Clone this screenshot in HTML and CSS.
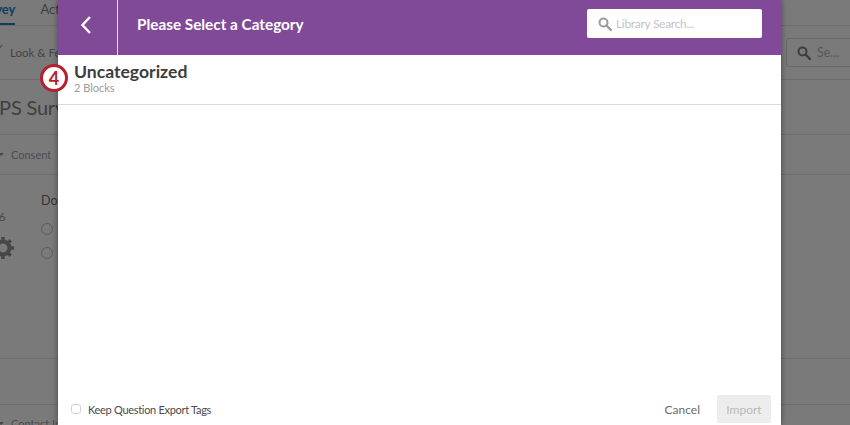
FILE: index.html
```html
<!DOCTYPE html>
<html lang="en">
<head>
<meta charset="utf-8">
<title>Please Select a Category</title>
<link rel="stylesheet" href="styles.css">
</head>
<body>
<div class="page">
  <div class="tabs">
    <span class="tab tab-active">Survey</span>
    <span class="tab">Actions</span>
  </div>
  <div class="toolbar">
    <span class="tool"><svg class="tool-check" viewBox="0 0 8 8"><path d="M1 4l1 1 3-4" fill="none" stroke="#4a4a4a" stroke-width="1.2"/></svg>Look &amp; Feel</span>
    <span class="bg-search">
      <svg class="bg-search-icon" viewBox="0 0 14 14"><circle cx="5.5" cy="5.5" r="4" fill="none" stroke="#3d3d3d" stroke-width="2"/><path d="M8.5 8.5l4.3 4.3" stroke="#3d3d3d" stroke-width="2.4" stroke-linecap="round"/></svg>Se...
    </span>
  </div>
  <div class="survey-title">NPS Survey</div>
  <div class="block-head"><span class="caret"></span>Consent</div>
  <div class="question">
    <div class="q-side">
      <span class="q-num">Q6</span>
      <svg class="gear" viewBox="0 0 24 24"><circle cx="12" cy="12" r="6.5" fill="none" stroke="#474747" stroke-width="4"/><path d="M12 1v22M1 12h22M4.2 4.2l15.6 15.6M19.8 4.2L4.2 19.8" stroke="#474747" stroke-width="3.4" stroke-dasharray="4 14"/></svg>
    </div>
    <div class="q-body">
      <div class="q-text">Do you consent?</div>
      <div class="q-option"><span class="radio"></span></div>
      <div class="q-option"><span class="radio"></span></div>
    </div>
  </div>
  <div class="bottom-gap"></div>
  <div class="block-foot"><span class="caret"></span>Contact Info</div>
</div>

<div class="modal">
  <header class="modal-head">
    <button class="back" type="button" aria-label="Back">
      <svg class="back-icon" viewBox="0 0 12 20"><path d="M10 2L2.5 10l7.5 8" fill="none" stroke="#fff" stroke-width="2.4"/></svg>
    </button>
    <h1 class="modal-title">Please Select a Category</h1>
    <div class="lib-search">
      <svg class="lib-search-icon" viewBox="0 0 14 14"><circle cx="5.5" cy="5.5" r="4" fill="none" stroke="#9b9b9b" stroke-width="2"/><path d="M8.5 8.5l4.3 4.3" stroke="#9b9b9b" stroke-width="2.4" stroke-linecap="round"/></svg>
      <span>Library Search...</span>
    </div>
  </header>
  <div class="cat-head">
    <h2 class="cat-title">Uncategorized</h2>
    <div class="cat-sub">2 Blocks</div>
  </div>
  <div class="modal-body"></div>
  <footer class="modal-foot">
    <label class="keep"><span class="checkbox"></span>Keep Question Export Tags</label>
    <div class="actions">
      <span class="cancel">Cancel</span>
      <span class="import">Import</span>
    </div>
  </footer>
</div>

<div class="badge">4</div>
</body>
</html>
```
FILE: styles.css
```css
* { box-sizing: border-box; }
html, body { margin: 0; height: 100%; }
body {
  width: 850px;
  height: 425px;
  overflow: hidden;
  position: relative;
  background: #7a7a7a;
  font-family: Lato, "Noto Sans", sans-serif;
}
.page { height: 425px; overflow: hidden; color: #474747; }
.tabs {
  height: 26px;
  display: flex;
  gap: 25px;
  margin-left: -24px;
  border-bottom: 1px solid #6d6d6d;
  font-size: 13px;
  line-height: 19px;
}
.tab { height: 25px; color: #3f3f3f; }
.tab-active { color: #103c5e; font-weight: 700; border-bottom: 2px solid #103c5e; }
.toolbar {
  height: 54px;
  display: flex;
  align-items: center;
  justify-content: space-between;
  border-bottom: 1px solid #6d6d6d;
  font-size: 11.5px;
}
.tool { display: flex; align-items: center; margin-left: -3px; position: relative; padding-left: 13px; color: #434343; }
.tool-check { width: 8px; height: 8px; position: absolute; left: 0; top: -2px; }
.bg-search {
  width: 80px;
  height: 29px;
  margin-left: auto;
  margin-right: -16px;
  border: 1px solid #696969;
  border-radius: 3px;
  display: flex;
  align-items: center;
  padding-left: 10px;
  gap: 6px;
  font-size: 12.5px;
  color: #575757;
}
.bg-search-icon { width: 14px; height: 14px; }
.survey-title {
  height: 55px;
  padding-top: 14px;
  margin-left: -16px;
  border-bottom: 1px solid #6d6d6d;
  font-size: 20px;
  letter-spacing: -0.2px;
  line-height: 26px;
  white-space: nowrap;
  color: #3f3f3f;
}
.block-head, .block-foot {
  display: flex;
  align-items: center;
  gap: 7px;
  font-size: 11px;
  color: #4d4d4d;
}
.block-head { height: 40px; border-bottom: 1px solid #6d6d6d; }
.caret {
  width: 0;
  height: 0;
  margin-left: -2px;
  border-left: 3px solid transparent;
  border-right: 3px solid transparent;
  border-top: 3px solid #474747;
}
.question { height: 184px; display: flex; border-bottom: 1px solid #6d6d6d; }
.q-side { width: 44px; margin-left: -11px; padding-top: 34px; flex: none; display: flex; flex-direction: column; }
.q-num { font-size: 12px; line-height: 16px; color: #474747; align-self: flex-start; }
.gear { width: 24px; height: 24px; margin-top: 11px; margin-left: 2px; }
.q-body { padding-top: 17px; padding-left: 8px; white-space: nowrap; }
.q-text { font-size: 12.5px; line-height: 18px; color: #333; margin-bottom: 13px; }
.q-option { height: 24px; }
.radio { display: block; width: 12px; height: 12px; border: 1px solid #5e5e5e; border-radius: 50%; }
.bottom-gap { height: 46px; border-bottom: 1px solid #6d6d6d; }
.block-foot { height: 30px; padding-top: 6px; }

.modal {
  position: absolute;
  left: 58px;
  top: 0;
  width: 723px;
  height: 425px;
  background: #fff;
  display: flex;
  flex-direction: column;
  box-shadow: 0 0 6px rgba(0, 0, 0, 0.45);
}
.modal-head {
  height: 55px;
  flex: none;
  display: flex;
  align-items: flex-start;
  background: #804a99;
  color: #fff;
}
.back {
  width: 60px;
  height: 55px;
  padding: 0 0 5px;
  background: none;
  border: 0;
  border-right: 1px solid #e3d7e8;
  display: flex;
  align-items: center;
  justify-content: center;
  flex: none;
}
.back-icon { width: 12px; height: 20px; margin-left: -4px; }
.modal-title {
  margin: 14px 0 0 19px;
  font-size: 15.3px;
  font-weight: 700;
  line-height: 21px;
  flex: 1;
}
.lib-search {
  width: 175px;
  height: 29px;
  margin: 9px 19px 0 0;
  background: #fff;
  border-radius: 2px;
  display: flex;
  align-items: center;
  gap: 4px;
  padding-left: 11px;
  font-size: 12px;
  letter-spacing: -0.3px;
  color: #c4c4c4;
}
.lib-search-icon { width: 14px; height: 14px; }
.cat-head {
  height: 50px;
  flex: none;
  padding: 7px 16px 0;
  border-bottom: 1px solid #d9d9d9;
}
.cat-title { margin: 0; font-size: 17.6px; font-weight: 700; line-height: 20px; color: #3d3d3d; }
.cat-sub { font-size: 11px; line-height: 12px; color: #9a9a9a; }
.modal-body { flex: 1; }
.modal-foot {
  height: 46px;
  flex: none;
  display: flex;
  align-items: flex-start;
  justify-content: space-between;
  padding: 20px 10px 0 13px;
  font-size: 11px;
}
.keep { display: flex; align-items: center; gap: 7px; height: 20px; color: #4a4a4a; letter-spacing: -0.3px; }
.checkbox { width: 10px; height: 10px; border: 1px solid #d2d2d2; border-radius: 3px; }
.actions { display: flex; align-items: center; gap: 17px; margin-top: -4px; }
.cancel { font-size: 12px; color: #6b6b6b; }
.import {
  width: 54px;
  height: 28px;
  border-radius: 2px;
  background: #ededed;
  color: #b9b9b9;
  font-size: 12px;
  display: flex;
  align-items: center;
  justify-content: center;
}
.badge {
  position: absolute;
  left: 40px;
  top: 64px;
  width: 28px;
  height: 28px;
  border: 3px solid #b5202e;
  border-radius: 50%;
  background: #fff;
  color: #b5202e;
  font-size: 18px;
  font-weight: 700;
  line-height: 22px;
  text-align: center;
}
```
